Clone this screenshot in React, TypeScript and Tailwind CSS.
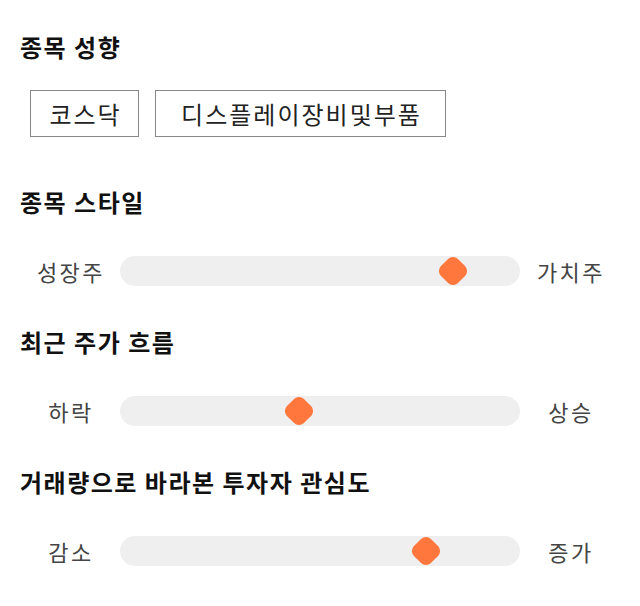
const font = { fontFamily: '"Noto Sans CJK KR", "Noto Sans", sans-serif' };

type SliderRow = { title: string; left: string; right: string; pos: number };

const rows: SliderRow[] = [
  { title: "종목 스타일", left: "성장주", right: "가치주", pos: 333 },
  { title: "최근 주가 흐름", left: "하락", right: "상승", pos: 179 },
  { title: "거래량으로 바라본 투자자 관심도", left: "감소", right: "증가", pos: 306 },
];

function Slider({ row }: { row: SliderRow }) {
  return (
    <div className="flex items-center">
      <div className="w-[100px] pl-[2px] text-center text-[22px] leading-[30px] tracking-[2.5px] text-[#444]">
        {row.left}
      </div>
      <div className="relative h-[30px] w-[400px] rounded-full bg-[#efefef]">
        <div
          className="absolute top-[3px] h-6 w-6 -translate-x-1/2 rotate-45 rounded-[7px] bg-[#ff773c]"
          style={{ left: row.pos }}
        />
      </div>
      <div className="w-[100px] pl-[2px] text-center text-[22px] leading-[30px] tracking-[2.5px] text-[#444]">
        {row.right}
      </div>
    </div>
  );
}

export default function App() {
  return (
    <div className="min-h-[606px] bg-white px-5 pt-[30px]" style={font}>
      <h2 className="text-[24px] font-bold leading-[34px] tracking-[1.5px] text-[#111]">종목 성향</h2>
      <div className="mt-[26px] ml-[10px] flex gap-4">
        <span className="w-[109px] border border-[#888] pl-[2px] text-center text-[24px] leading-[45px] tracking-[2px] text-[#222]">
          코스닥
        </span>
        <span className="w-[291px] border border-[#888] pl-[2px] text-center text-[24px] leading-[45px] tracking-[2px] text-[#222]">
          디스플레이장비및부품
        </span>
      </div>
      {rows.map((row, i) => (
        <div key={row.title} className={i === 0 ? "mt-[48px]" : "mt-[39px]"}>
          <h2 className="text-[24px] font-bold leading-[34px] tracking-[1.5px] text-[#111]">{row.title}</h2>
          <div className="mt-[37px]">
            <Slider row={row} />
          </div>
        </div>
      ))}
    </div>
  );
}
